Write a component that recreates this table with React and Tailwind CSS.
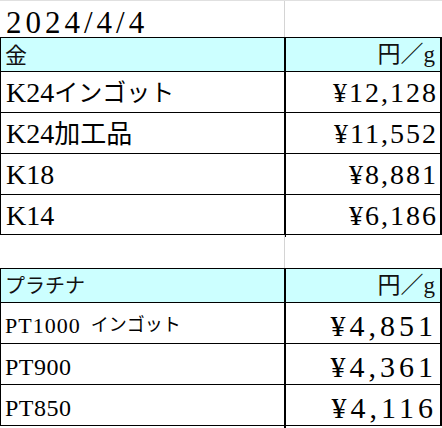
import React from 'react';

const FONT = { fontFamily: "'Liberation Serif', 'Noto Sans CJK JP', serif" };

// latin と かな で文字サイズが違うので分けて持つ
const GOLD = [
  { latin: 'K24', kana: 'インゴット', kanaSize: 'text-[24px]', price: '¥12,128' },
  { latin: 'K24', kana: '加工品', kanaSize: 'text-[26px]', price: '¥11,552' },
  { latin: 'K18', price: '¥8,881' },
  { latin: 'K14', price: '¥6,186', last: true },
];

const PLATINUM = [
  { latin: 'PT1000', kana: 'インゴット', price: '¥4,851', small: true },
  { latin: 'PT900', price: '¥4,361' },
  { latin: 'PT850', price: '¥4,116' },
];

function HeaderRow({ label, size }) {
  return (
    <div className="grid grid-cols-[285px_1fr] h-[34px] bg-[#ccffff] border-b border-black">
      <div className={`flex items-center pl-[4px] border-r-2 border-black text-[#111] ${size}`}>
        {label}
      </div>
      <div className="flex items-center justify-end pr-[5px] text-[23px] text-[#111]">
        円／g
      </div>
    </div>
  );
}

export default function App() {
  return (
    <div className="w-[442px] h-[428px] bg-white text-black overflow-hidden" style={FONT}>
      {/* 日付 */}
      <div className="grid grid-cols-[285px_1fr] h-[37px] border-t border-[#e0e0e0]">
        <div className="flex items-end pl-[6px] border-r border-[#d4d4d4] text-[31px] leading-[28px] tracking-[4px]">
          2024/4/4
        </div>
        <div />
      </div>

      {/* 金 */}
      <div className="border-t border-l border-r-2 border-black">
        <HeaderRow label="金" size="text-[22px]" />
        {GOLD.map(row => (
          <div
            key={row.latin + (row.kana || '')}
            className={`grid grid-cols-[285px_1fr] border-b border-black ${row.last ? 'h-[40px]' : 'h-[41px]'}`}
          >
            <div className="flex items-center pl-[5px] border-r-2 border-black">
              <span className="text-[28px]">{row.latin}</span>
              {row.kana && <span className={row.kanaSize}>{row.kana}</span>}
            </div>
            <div className="flex items-center justify-end pr-[2px] text-[28px] tracking-[2px]">
              {row.price}
            </div>
          </div>
        ))}
      </div>

      {/* 空行 */}
      <div className="grid grid-cols-[285px_1fr] h-[33px]">
        <div className="border-r border-[#d4d4d4]" />
        <div />
      </div>

      {/* プラチナ */}
      <div className="border-t border-l border-r-2 border-black">
        <HeaderRow label="プラチナ" size="text-[20px]" />
        {PLATINUM.map(row => (
          <div key={row.latin} className="grid grid-cols-[285px_1fr] h-[41px] border-b border-black">
            <div className="flex items-center pl-[4px] border-r-2 border-black">
              {row.small ? (
                <>
                  <span className="text-[22px] tracking-[1px]">{row.latin}</span>
                  <span className="text-[18px] ml-[10px]">{row.kana}</span>
                </>
              ) : (
                <span className="text-[24px] tracking-[0.5px]">{row.latin}</span>
              )}
            </div>
            <div className="flex items-center justify-end pr-[3px] text-[30px] tracking-[4px]">
              {row.price}
            </div>
          </div>
        ))}
      </div>
    </div>
  );
}
